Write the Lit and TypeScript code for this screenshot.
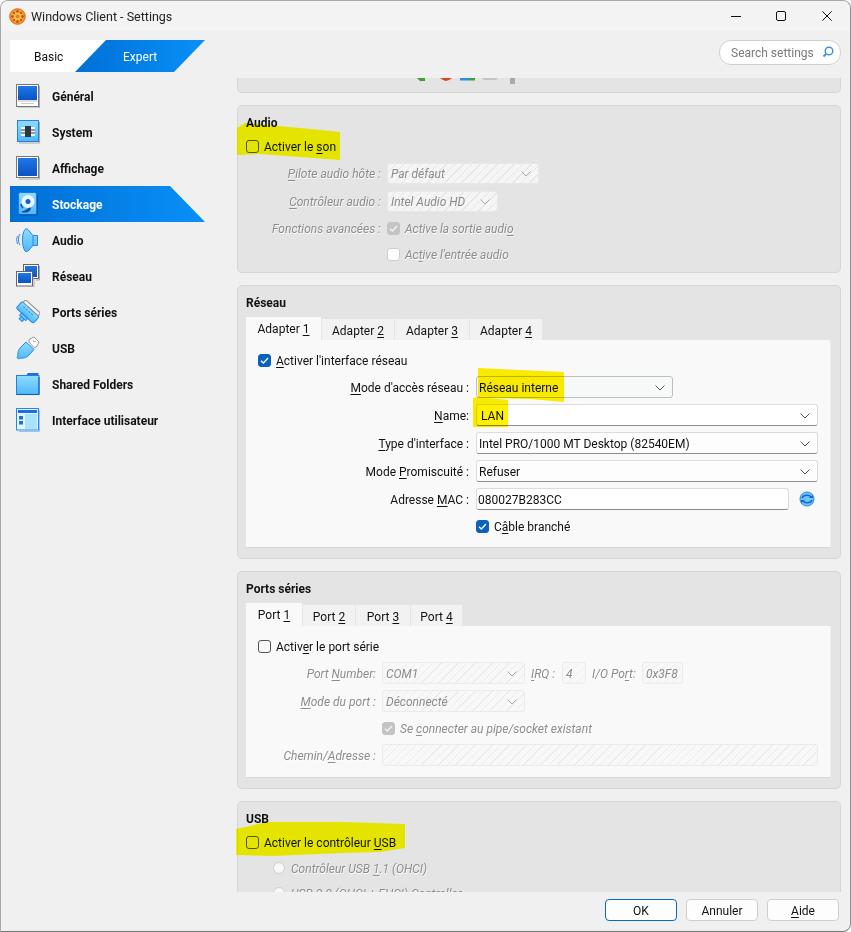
import { LitElement, html, css, svg } from "lit";
import { customElement } from "lit/decorators.js";

const I = (c: unknown) => html`<svg class="ico" viewBox="0 0 24 24" width="24" height="24">${c}</svg>`;
const defs = svg`<defs>
<linearGradient id="bl" x1="0" y1="0" x2="0" y2="1"><stop offset="0" stop-color="#1f78e8"/><stop offset="1" stop-color="#0b52c0"/></linearGradient>
<linearGradient id="lb" x1="0" y1="0" x2="0" y2="1"><stop offset="0" stop-color="#8fdcff"/><stop offset="1" stop-color="#4db8fa"/></linearGradient>
</defs>`;
const icons: Record<string, unknown> = {
  general: I(svg`<rect x="0.5" y="0.5" width="22" height="22" fill="#fff" stroke="#777"/><rect x="2" y="2" width="19" height="14" fill="url(#bl)"/><path d="M2 17h19" stroke="#bbb"/><path d="M5 19.5h13" stroke="#ccc"/><path d="M23.500 2v22H2" fill="none" stroke="#aaa"/>`),
  system: I(svg`<rect x="1.500" y="0.500" width="21" height="21" fill="url(#lb)" stroke="#2a7de0"/><path d="M23.500 2v21H3" fill="none" stroke="#aaa"/><rect x="5" y="7" width="14" height="9" fill="#eef7ff"/><rect x="9" y="6" width="6" height="11" fill="#2e3644"/><path d="M5 10h4M5 13h4M15 10h4M15 13h4" stroke="#2e3644"/>`),
  display: I(svg`<rect x="0.500" y="0.500" width="22" height="21" fill="#fff" stroke="#777"/><rect x="2" y="2" width="19" height="18" fill="url(#bl)"/><path d="M23.500 2v21H3" fill="none" stroke="#aaa"/>`),
  storage: I(svg`<rect x="2.500" y="0.500" width="18" height="22" rx="2" fill="url(#lb)" stroke="#1c78e0"/><path d="M21.500 3v20H4" fill="none" stroke="#0a4fb0"/><circle cx="12" cy="9.500" r="6.500" fill="#e8f6ff"/><circle cx="12" cy="9.500" r="2.500" fill="#1a5fc8"/><path d="M12 16c-2 3-5 2-7 4.500h6c3-1 4-3 4-5z" fill="#14509f"/><path d="M5 12c0 2 1 3 2 4" stroke="#14509f" fill="none" stroke-width="1.500"/>`),
  audio: I(svg`<path d="M9 1.500c1-1 2-1 3 0l5 6h4.500v10H17l-5 5.500c-1 .8-2 .8-3 0-2-3-2.500-7-2.500-11s.5-8 2.500-10.500z" fill="url(#lb)" stroke="#2a86e6"/><path d="M4 6C2 9 2 14 4 17M1.500 8c-1 2-1 5 0 8" fill="none" stroke="#2a86e6"/><path d="M17 7.500v10" stroke="#2a86e6"/>`),
  net: I(svg`<rect x="7.500" y="0.500" width="15" height="14" fill="#fff" stroke="#666"/><rect x="9" y="2" width="12" height="11" fill="url(#bl)"/><path d="M23.500 2v14H20" fill="none" stroke="#aaa"/><rect x="0.500" y="7.500" width="16" height="14.500" fill="#fff" stroke="#666"/><rect x="2" y="9" width="13" height="10" fill="url(#bl)"/><path d="M2 22.500h16v-8" fill="none" stroke="#aaa"/>`),
  serial: I(svg`<g transform="rotate(42 12 12)"><rect x="0.500" y="8" width="23" height="9" rx="2" fill="url(#lb)" stroke="#2a86e6"/><rect x="2" y="4.500" width="20" height="3.500" fill="#f6f6f6" stroke="#8e8e8e"/><path d="M5 11h14" stroke="#2a86e6" stroke-dasharray="2 1.500"/><rect x="8" y="17" width="8" height="3" fill="#6cc8ff" stroke="#2a86e6"/><rect x="10" y="20" width="4" height="3" fill="#6cc8ff" stroke="#2a86e6"/></g>`),
  usb: I(svg`<path d="M10 6 5 11c-3 3-3.500 6-3 9l-1 1.500 1.500 1.500 1.500-1c3 .5 6 0 9-3l5-5.500z" fill="url(#lb)" stroke="#2a86e6"/><path d="M13 3.500 18 1l5 5-2.500 5-2.500.5L13 6z" fill="#fff" stroke="#999"/><path d="M17 4.500l1.500 1.500M19.500 5.500 20 6" stroke="#777"/>`),
  folder: I(svg`<path d="M10 3.500 12 1h10.500v4H10z" fill="#1c6fe0"/><rect x="0.500" y="3.500" width="22.500" height="19" fill="url(#lb)" stroke="#2a7de0"/><path d="M1 22.500h22V5" fill="none" stroke="#1455b0"/>`),
  ui: I(svg`<rect x="0.500" y="0.500" width="22" height="21.500" fill="#e6f6ff" stroke="#2a86e6"/><rect x="2" y="2" width="19" height="3" fill="#1c6fe0"/><rect x="2" y="5" width="6" height="15" fill="#e6f6ff"/><rect x="9" y="6" width="12" height="15" fill="#a8e2ff"/><rect x="3" y="8" width="4" height="3.500" fill="#1c6fe0"/><rect x="3" y="13" width="4" height="3.500" fill="#1c6fe0"/><path d="M23.500 2v21.500H3" fill="none" stroke="#9cc4ee"/>`),
};

const nav = [
  ["general", "Général"], ["system", "System"], ["display", "Affichage"], ["storage", "Stockage"],
  ["audio", "Audio"], ["net", "Réseau"], ["serial", "Ports séries"], ["usb", "USB"],
  ["folder", "Shared Folders"], ["ui", "Interface utilisateur"],
];

const chevron = html`<svg class="chev" width="10" height="6" viewBox="0 0 10 6"><path d="M.5.5 5 5 9.500.5" fill="none" stroke="currentColor"/></svg>`;
const tick = html`<svg width="11" height="11" viewBox="0 0 11 11" style="display:block"><path d="M2 5.800 4.400 8 9 3" fill="none" stroke="currentColor" stroke-width="1.300"/></svg>`;

@customElement("app-root")
export class AppRoot extends LitElement {
  static styles = css`
    :host { display: block; width: 851px; height: 932px; background: #fff; font-family: Roboto, "Liberation Sans", sans-serif; font-size: 12px; color: #111; position: relative; overflow: hidden; }
    * { box-sizing: border-box; }
    u { text-underline-offset: 2px; text-decoration-thickness: 1px; }
    .win { width: 851px; height: 932px; background: #f0f0f0; border: 1px solid #a8a8a8; border-right-color: #8f8f8f; border-bottom-color: #777; border-radius: 8px 8px 8px 0; display: flex; flex-direction: column; overflow: hidden; }
    .title { height: 30px; flex: none; background: #f3f3f3; display: flex; align-items: center; padding-left: 8px; font-size: 12.500px; color: #222; }
    .title .app { width: 17px; height: 17px; margin-right: 5px; margin-top: 1px; }
    .title span { flex: 1; }
    .ctl { display: flex; align-items: center; padding-right: 18px; gap: 35px; margin-top: -1px; }
    .ctl .x { margin-left: 1px; }
    .body { flex: 1; min-height: 0; display: flex; }
    .side { width: 236px; flex: none; padding: 9px 0 0 9px; }
    .mode { display: flex; height: 32px; width: 195px; margin-bottom: 6px; }
    .basic { width: 96px; background: #fff; clip-path: polygon(0 0, 96px 0, 65px 32px, 0 32px); padding-left: 24px; line-height: 35px; }
    .expert { width: 130px; margin-left: -31px; background: linear-gradient(90deg, #0070d6, #0890f8); color: #fff; clip-path: polygon(31px 0, 130px 0, 99px 32px, 0 32px); padding-left: 48px; line-height: 35px; }
    .item { height: 36px; width: 195px; display: flex; align-items: center; padding-left: 6px; gap: 12px; font-weight: 700; }
    .item span { padding-top: 2px; }
    .item.sel { background: linear-gradient(90deg, #006fd4, #0890f8); color: #fff; clip-path: polygon(0 0, 160px 0, 195px 36px, 0 36px); }
    .ico { flex: none; display: block; }
    .right { flex: 1; min-width: 0; display: flex; flex-direction: column; padding-right: 9px; }
    .search { flex: none; height: 47px; padding-top: 9px; display: flex; justify-content: flex-end; }
    .sbox { width: 122px; height: 25px; background: #fff; border: 1px solid #cfcfcf; border-radius: 12px; color: #7a7a7a; display: flex; align-items: center; justify-content: space-between; padding: 0 6px 0 11px; }
    .scroll { flex: 1; min-height: 0; overflow: hidden; display: flex; flex-direction: column; gap: 12px; }
    .card { flex: none; background: #e4e4e4; border: 1px solid #d6d6d6; border-radius: 5px; padding: 8px 9px 0 8px; position: relative; }
    .strip { height: 15px; border-top: none; border-radius: 0 0 5px 5px; padding: 0 0 0 178px; }
    .h { font-weight: 700; height: 17px; line-height: 17px; padding-top: 1px; }
    .chk { display: flex; align-items: center; gap: 5px; height: 20px; }
    .chk > span:last-child { padding-top: 2px; }
    .box { width: 13px; height: 13px; flex: none; border: 1px solid #555; border-radius: 3px; background: transparent; display: block; }
    .box.on { background: #0b62bd; border-color: #0b62bd; color: #fff; }
    .box.dis { background: #fdfdfd; border-color: #cfcfcf; }
    .box.dison { background: #c4c4c4; border-color: #c4c4c4; color: #f4f4f4; }
    .dim { color: #8c8c8c; font-style: italic; text-shadow: 0.500px 0.500px 0 #fff; }
    .row { display: flex; align-items: center; }
    .row.tall { height: 26px !important; }
    .row.dim > span:last-child { padding-top: 2px; }
    .lbl { text-align: right; flex: none; padding: 2px 6px 0 0; white-space: nowrap; }
    .combo { height: 22px; border: 1px solid #dcdcdc; border-bottom-color: #8d8d8d; border-radius: 3px; background: #fdfdfd; display: flex; align-items: center; justify-content: space-between; padding: 2px 7px 0 2px; white-space: nowrap; flex: none; }
    .combo.mode2 { border-color: #b9c0c8; background: #f7f8f8; }
    .combo.white { background: #fff; }
    .combo.lan { padding-left: 4px; }
    .combo.mac { padding-left: 1px; }
    .combo.dis { height: 21px; border-color: #e8e8e8; background: repeating-linear-gradient(135deg, #f5f5f5 0 5px, #e6e6e6 5px 6px); color: #8c8c8c; font-style: italic; padding-left: 3px; }
    .panelbg .combo.dis { height: 22px; background: repeating-linear-gradient(135deg, #f8f8f8 0 5px, #ececec 5px 6px); border-color: #ebebeb; }
    .chev { flex: none; color: #555; }
    .dis .chev { color: #aaa; }
    .tabs { display: flex; align-items: flex-end; height: 23px; margin-top: 6px; }
    .tab { height: 21px; background: #f2f2f2; border-right: 1px solid #e4e4e4; line-height: 24px; text-align: center; }
    .tab.on { height: 23px; background: #f9f9f9; line-height: 25px; }
    .panel { background: #f9f9f9; border-bottom: 1px solid #d8d8d8; border-right: 1px solid #ededed; padding: 10px 12px 0; }
    .audio { height: 168px; }
    .audio .row { height: 28px; }
    .audio .lbl { width: 141px; }
    .net { height: 274px; }
    .net .panel { height: 208px; }
    .net .row { height: 28px; }
    .net .lbl { width: 218px; padding-right: 7px; }
    .ports { height: 218px; }
    .ports .panel { height: 152px; }
    .ports .row { height: 28px; }
    .ports .lbl { width: 124px; }
    .usb { height: 100px; }
    .radio { width: 12px; height: 12px; border-radius: 50%; background: #f8f8f8; border: 1px solid #cfcfcf; flex: none; }
    .rad { margin-left: 27px; gap: 6px; height: 20px; }
    .refresh { margin-left: 10px; flex: none; }
    .irq { width: 37px; padding: 2px 0 0 6px; flex: none; }
    .io { width: 56px; padding: 2px 0 0 6px; flex: none; }
    .foot { flex: none; height: 39px; display: flex; justify-content: flex-end; gap: 9px; padding: 7px 11px 0 0; }
    .btn { width: 72px; height: 22px; border: 1px solid #cfcfcf; border-radius: 4px; background: #fdfdfd; text-align: center; line-height: 22px; }
    .btn.def { border-color: #0b67c0; }
    .hl { position: absolute; left: 0; top: 0; pointer-events: none; mix-blend-mode: multiply; }
  `;

  private check(state: string, text: unknown, dim = false) {
    return html`<div class="chk ${dim ? "dim" : ""}"><span class="box ${state}">${state === "on" || state === "dison" ? tick : ""}</span><span>${text}</span></div>`;
  }

  render() {
    return html`
      <div class="win">
        <svg width="0" height="0" style="position:absolute">${defs}</svg>
        <div class="title">
          <svg class="app" viewBox="0 0 17 17"><circle cx="8.500" cy="8.500" r="7.800" fill="#f59a23" stroke="#d9691a"/><circle cx="8.500" cy="8.500" r="4.600" fill="#fbc04a"/><g fill="#c8401c"><circle cx="8.500" cy="3.500" r="1.300"/><circle cx="8.500" cy="13.500" r="1.300"/><circle cx="3.500" cy="8.500" r="1.300"/><circle cx="13.500" cy="8.500" r="1.300"/><circle cx="5" cy="5" r="1.100"/><circle cx="12" cy="5" r="1.100"/><circle cx="5" cy="12" r="1.100"/><circle cx="12" cy="12" r="1.100"/></g><circle cx="8.500" cy="8.500" r="1.800" fill="#e8761e"/></svg>
          <span>Windows Client - Settings</span>
          <div class="ctl">
            <svg width="10" height="10" viewBox="0 0 10 10"><path d="M0 5.500h10" stroke="#111"/></svg>
            <svg width="10" height="10" viewBox="0 0 10 10"><rect x=".5" y=".5" width="9" height="9" rx="1.500" fill="none" stroke="#111"/></svg>
            <svg class="x" width="10" height="10" viewBox="0 0 10 10"><path d="M.3.3l9.400 9.400M9.700.3.3 9.700" stroke="#111"/></svg>
          </div>
        </div>
        <div class="body">
          <div class="side">
            <div class="mode"><div class="basic">Basic</div><div class="expert">Expert</div></div>
            ${nav.map(([k, t]) => html`<div class="item ${k === "storage" ? "sel" : ""}">${icons[k]}<span>${t}</span></div>`)}
          </div>
          <div class="right">
            <div class="search"><div class="sbox"><span>Search settings</span>
              <svg width="13" height="13" viewBox="0 0 13 13"><circle cx="8" cy="5" r="3.800" fill="#fff" stroke="#3c8fe0" stroke-width="1.400"/><path d="M5 8 2.500 10.500" stroke="#3c8fe0" stroke-width="2"/></svg></div></div>
            <div class="scroll">
              <div class="card strip">
                <svg width="102" height="7" viewBox="0 0 102 7" style="display:block"><path d="M1 0h8v3H4z" fill="#3f9f2f"/><path d="M24 0h12l-3 2-3 1-3-1z" fill="#d8481f"/><rect x="44" y="0" width="10" height="2.500" fill="#2c8fe0"/><rect x="54" y="0" width="5" height="2.500" fill="#3f9f2f"/><path d="M66 0h16l-2 2h-12z" fill="#c4c4c4"/><rect x="94" y="0" width="5" height="6" fill="#a9a9a9"/></svg>
              </div>
              <div class="card audio">
                <div class="h">Audio</div>
                <div style="height:5px"></div>
                ${this.check("", html`Activer le <u>s</u>on`)}
                <div style="height:3px"></div>
                <div class="row"><div class="lbl dim"><u>P</u>ilote audio hôte :</div><div class="combo dis" style="width:152px">Par défaut ${chevron}</div></div>
                <div class="row"><div class="lbl dim"><u>C</u>ontrôleur audio :</div><div class="combo dis" style="width:111px">Intel Audio HD ${chevron}</div></div>
                <div class="row tall"><div class="lbl dim">Fonctions avancées :</div>${this.check("dison", html`Active la sortie audi<u>o</u>`, true)}</div>
                <div class="row tall"><div class="lbl"></div>${this.check("dis", html`Ac<u>t</u>ive l'entrée audio`, true)}</div>
              </div>
              <div class="card net">
                <div class="h">Réseau</div>
                <div class="tabs">
                  <div class="tab on" style="width:76px">Adapter <u>1</u></div>
                  <div class="tab" style="width:73px">Adapter <u>2</u></div>
                  <div class="tab" style="width:75px">Adapter <u>3</u></div>
                  <div class="tab" style="width:73px">Adapter <u>4</u></div>
                </div>
                <div class="panel">
                  ${this.check("on", html`<u>A</u>ctiver l'interface réseau`)}
                  <div style="height:3px"></div>
                  <div class="row"><div class="lbl"><u>M</u>ode d'accès réseau :</div><div class="combo mode2" style="width:197px">Réseau interne ${chevron}</div></div>
                  <div class="row"><div class="lbl"><u>N</u>ame:</div><div class="combo white lan" style="width:342px">LAN ${chevron}</div></div>
                  <div class="row"><div class="lbl"><u>T</u>ype d'interface :</div><div class="combo" style="width:342px">Intel PRO/1000 MT Desktop (82540EM) ${chevron}</div></div>
                  <div class="row"><div class="lbl">Mode <u>P</u>romiscuité :</div><div class="combo" style="width:342px">Refuser ${chevron}</div></div>
                  <div class="row"><div class="lbl">Adresse <u>M</u>AC :</div><div class="combo white mac" style="width:313px">080027B283CC</div>
                    <svg class="refresh" width="16" height="16" viewBox="0 0 16 16"><circle cx="8" cy="8" r="7" fill="#6cc4fb" stroke="#2a86e6"/><path d="M3 7c1-3 7-4 9-1M13 9c-1 3-7 4-9 1" fill="none" stroke="#1766cc" stroke-width="1.500"/><path d="M10 7h4V4zM6 9H2v3z" fill="#1766cc"/></svg></div>
                  <div class="row tall"><div class="lbl"></div>${this.check("on", html`C<u>â</u>ble branché`)}</div>
                </div>
              </div>
              <div class="card ports">
                <div class="h">Ports séries</div>
                <div class="tabs">
                  <div class="tab on" style="width:57px">Port <u>1</u></div>
                  <div class="tab" style="width:53px">Port <u>2</u></div>
                  <div class="tab" style="width:55px">Port <u>3</u></div>
                  <div class="tab" style="width:52px">Port <u>4</u></div>
                </div>
                <div class="panel panelbg">
                  ${this.check("", html`Activ<u>e</u>r le port série`)}
                  <div class="row" style="margin-top:3px"><div class="lbl dim">Port <u>N</u>umber:</div><div class="combo dis" style="width:143px">COM1 ${chevron}</div>
                    <div class="dim irq"><u>I</u>RQ :</div><div class="combo dis" style="width:24px">4</div>
                    <div class="dim io">I/O Po<u>r</u>t:</div><div class="combo dis" style="width:41px">0x3F8</div></div>
                  <div class="row"><div class="lbl dim"><u>M</u>ode du port :</div><div class="combo dis" style="width:143px">Déconnecté ${chevron}</div></div>
                  <div class="row tall"><div class="lbl"></div>${this.check("dison", html`Se <u>c</u>onnecter au pipe/socket existant`, true)}</div>
                  <div class="row"><div class="lbl dim">Chemin/<u>A</u>dresse :</div><div class="combo dis" style="width:436px"></div></div>
                </div>
              </div>
              <div class="card usb">
                <div class="h">USB</div>
                <div style="height:5px"></div>
                ${this.check("", html`Activer le contrôleur <u>U</u>SB`)}
                <div class="row dim rad" style="margin-top:6px"><span class="radio"></span><span>Contrôleur USB <u>1</u>.1 (OHCI)</span></div>
                <div class="row dim rad" style="margin-top:5px"><span class="radio"></span><span>USB 2.0 (OHCI + EHCI) Controller</span></div>
              </div>
            </div>
          </div>
        </div>
        <div class="foot">
          <div class="btn def">OK</div><div class="btn">Annuler</div><div class="btn"><u>A</u>ide</div>
        </div>
      </div>
      <svg class="hl" width="851" height="932" viewBox="0 0 851 932">
        <path d="M237 128 245 123 300 128 340 132V160L300 157 260 154 237 155z" fill="#ffff00"/>
        <path d="M478 368 520 370 564 372V402L530 399 478 398z" fill="#fff000"/>
        <path d="M473 398 478 397 508 400V427H473z" fill="#fff000"/>
        <path d="M236 829 250 826 267 822H343L405 824V848L380 852 343 853 273 856 236 855z" fill="#ffff00"/>
      </svg>
    `;
  }
}
